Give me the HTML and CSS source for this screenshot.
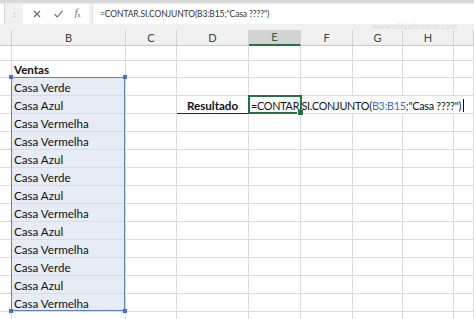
FILE: index.html
```html
<!DOCTYPE html>
<html lang="es">
<head>
<meta charset="utf-8">
<title>CONTAR.SI.CONJUNTO</title>
<link rel="stylesheet" href="styles.css">
</head>
<body>
<div class="app">
  <div class="topedge"></div>
  <div class="fbar">
    <div class="namebox"></div>
    <div class="grip"><span></span><span></span><span></span></div>
    <div class="fbtns">
      <svg class="ic" width="10" height="10" viewBox="0 0 10 10"><path d="M2 2L8 8M8 2L2 8" stroke="#666" stroke-width="1.1" fill="none"/></svg>
      <svg class="ic" width="11" height="10" viewBox="0 0 11 10"><path d="M1.5 5.2L4.2 8L9.5 1.8" stroke="#666" stroke-width="1.1" fill="none"/></svg>
      <span class="fx"><i>f</i><sub>x</sub></span>
    </div>
    <div class="finput">=CONTAR.SI.CONJUNTO(B3:B15;"Casa ????")</div>
  </div>
  <div class="gap"><span class="watermark">www.ninjadoexcel.com</span></div>
  <div class="sheet">
    <div class="row hdr">
      <div class="c"></div><div class="c">B</div><div class="c">C</div><div class="c">D</div><div class="c act">E</div><div class="c">F</div><div class="c">G</div><div class="c">H</div><div class="c"></div>
    </div>
    <div class="row r1">
      <div class="c"></div><div class="c"></div><div class="c"></div><div class="c"></div><div class="c"></div><div class="c"></div><div class="c"></div><div class="c"></div><div class="c"></div>
    </div>
    <div class="row r2">
      <div class="c"></div><div class="c b">Ventas</div><div class="c"></div><div class="c"></div><div class="c"></div><div class="c"></div><div class="c"></div><div class="c"></div><div class="c"></div>
    </div>
    <div class="row">
      <div class="c"></div><div class="c s">Casa Verde</div><div class="c"></div><div class="c"></div><div class="c"></div><div class="c"></div><div class="c"></div><div class="c"></div><div class="c"></div>
    </div>
    <div class="row">
      <div class="c"></div><div class="c s">Casa Azul</div><div class="c"></div><div class="c res">Resultado</div><div class="c flow"><span class="formula">=CONTAR.SI.CONJUNTO(<span class="ref">B3:B15</span>;"Casa ????")<span class="caret"></span></span></div><div class="c flow"></div><div class="c flow"></div><div class="c flow"></div><div class="c"></div>
    </div>
    <div class="row">
      <div class="c"></div><div class="c s">Casa Vermelha</div><div class="c"></div><div class="c"></div><div class="c"></div><div class="c"></div><div class="c"></div><div class="c"></div><div class="c"></div>
    </div>
    <div class="row">
      <div class="c"></div><div class="c s">Casa Vermelha</div><div class="c"></div><div class="c"></div><div class="c"></div><div class="c"></div><div class="c"></div><div class="c"></div><div class="c"></div>
    </div>
    <div class="row">
      <div class="c"></div><div class="c s">Casa Azul</div><div class="c"></div><div class="c"></div><div class="c"></div><div class="c"></div><div class="c"></div><div class="c"></div><div class="c"></div>
    </div>
    <div class="row">
      <div class="c"></div><div class="c s">Casa Verde</div><div class="c"></div><div class="c"></div><div class="c"></div><div class="c"></div><div class="c"></div><div class="c"></div><div class="c"></div>
    </div>
    <div class="row">
      <div class="c"></div><div class="c s">Casa Azul</div><div class="c"></div><div class="c"></div><div class="c"></div><div class="c"></div><div class="c"></div><div class="c"></div><div class="c"></div>
    </div>
    <div class="row">
      <div class="c"></div><div class="c s">Casa Vermelha</div><div class="c"></div><div class="c"></div><div class="c"></div><div class="c"></div><div class="c"></div><div class="c"></div><div class="c"></div>
    </div>
    <div class="row">
      <div class="c"></div><div class="c s">Casa Azul</div><div class="c"></div><div class="c"></div><div class="c"></div><div class="c"></div><div class="c"></div><div class="c"></div><div class="c"></div>
    </div>
    <div class="row">
      <div class="c"></div><div class="c s">Casa Vermelha</div><div class="c"></div><div class="c"></div><div class="c"></div><div class="c"></div><div class="c"></div><div class="c"></div><div class="c"></div>
    </div>
    <div class="row">
      <div class="c"></div><div class="c s">Casa Verde</div><div class="c"></div><div class="c"></div><div class="c"></div><div class="c"></div><div class="c"></div><div class="c"></div><div class="c"></div>
    </div>
    <div class="row">
      <div class="c"></div><div class="c s">Casa Azul</div><div class="c"></div><div class="c"></div><div class="c"></div><div class="c"></div><div class="c"></div><div class="c"></div><div class="c"></div>
    </div>
    <div class="row">
      <div class="c"></div><div class="c s">Casa Vermelha</div><div class="c"></div><div class="c"></div><div class="c"></div><div class="c"></div><div class="c"></div><div class="c"></div><div class="c"></div>
    </div>
    <div class="row">
      <div class="c"></div><div class="c"></div><div class="c"></div><div class="c"></div><div class="c"></div><div class="c"></div><div class="c"></div><div class="c"></div><div class="c"></div>
    </div>
    <div class="selection">
      <i class="h tl"></i><i class="h tr"></i><i class="h bl"></i><i class="h br"></i>
    </div>
    <div class="active"><i class="ah"></i></div>
  </div>
</div>
</body>
</html>
```
FILE: styles.css
```css
html, body {
  margin: 0;
  padding: 0;
  background: #ffffff;
}
body {
  width: 474px;
  height: 319px;
  overflow: hidden;
  font-family: Lato, "Open Sans", "Liberation Sans", sans-serif;
}
.app {
  display: flex;
  flex-direction: column;
  height: 319px;
  background: #f0f0f0;
}
.topedge {
  height: 3px;
  background: #d8d8d8;
  flex: none;
}
.fbar {
  display: flex;
  align-items: stretch;
  height: 20px;
  margin-top: 1px;
  flex: none;
}
.namebox {
  width: 4px;
  background: #fff;
  border-right: 1px solid #d4d4d4;
}
.grip {
  width: 18px;
  display: flex;
  flex-direction: column;
  align-items: center;
  justify-content: center;
  gap: 1px;
}
.grip span {
  width: 1px;
  height: 1px;
  background: #b5b5b5;
}
.fbtns {
  width: 66px;
  background: #fff;
  display: flex;
  align-items: center;
  justify-content: space-around;
  padding: 0 3px;
  box-sizing: border-box;
}
.fx {
  font-family: "Liberation Serif", serif;
  color: #666;
  font-size: 10px;
  line-height: 10px;
}
.fx sub {
  font-size: 6px;
  vertical-align: -1px;
}
.finput {
  flex: 1;
  margin-left: 3px;
  background: #fff;
  border-left: 1px solid #e2e2e2;
  font-size: 8.5px;
  letter-spacing: -0.1px;
  color: #333;
  line-height: 20px;
  padding-left: 7px;
  white-space: nowrap;
}
.gap {
  position: relative;
  height: 6px;
  flex: none;
}
.watermark {
  position: absolute;
  top: -1px;
  left: 372px;
  font-size: 8px;
  line-height: 7px;
  color: #d6d6d6;
  letter-spacing: 0.2px;
  white-space: nowrap;
  z-index: 3;
}
.sheet {
  position: relative;
  flex: none;
  display: flex;
  flex-direction: column;
  background: #fff;
}
.row {
  display: grid;
  grid-template-columns: 12px 114px 51px 72px 52px 52px 50px 51px 1fr;
  height: 18px;
  flex: none;
}
.c {
  border-right: 1px solid #dcdcdc;
  border-bottom: 1px solid #dcdcdc;
  font-size: 11.6px;
  color: #111;
  padding-left: 2px;
  display: flex;
  align-items: flex-end;
  padding-bottom: 0;
  white-space: nowrap;
  min-width: 0;
  line-height: 14px;
}
.hdr {
  height: 16px;
  background: #f0f0f0;
}
.hdr .c {
  background: #f0f0f0;
  border-right: 1px solid #d2d2d2;
  border-bottom: 1px solid #c9c9c9;
  justify-content: center;
  align-items: center;
  padding: 0;
  color: #444;
  font-size: 11px;
}
.hdr .c.act {
  background: #d3d3d3;
  border-bottom: 2px solid #217346;
  color: #2f5e3f;
}
.r1 { height: 15px; }
.r2 { height: 17px; }
.b { font-weight: 700; }
.s { background: #e6ecf6; }
.res {
  font-weight: 700;
  justify-content: center;
  padding-left: 0;
  border-bottom: 1px solid #262626;
}
.flow { border-right: none; overflow: visible; }
.formula {
  position: relative;
  z-index: 2;
  font-size: 10.8px;
  letter-spacing: -0.25px;
}
.ref { color: #3b6fc4; }
.caret {
  display: inline-block;
  width: 1px;
  height: 13px;
  background: #111;
  margin-left: 2px;
  vertical-align: -2px;
}
.selection {
  position: absolute;
  left: 11px;
  top: 47px;
  width: 112px;
  height: 232px;
  border: 1.5px solid #5a7fc6;
}
.h {
  position: absolute;
  width: 4px;
  height: 4px;
  background: #4a6fbf;
}
.tl { left: -3px; top: -3px; }
.tr { right: -3px; top: -3px; }
.bl { left: -3px; bottom: -3px; }
.br { right: -3px; bottom: -3px; }
.active {
  position: absolute;
  left: 248px;
  top: 65px;
  width: 50px;
  height: 15px;
  border: 2px solid #217346;
  z-index: 1;
}
.ah {
  position: absolute;
  right: -4px;
  bottom: -4px;
  width: 5px;
  height: 5px;
  background: #217346;
  border: 1px solid #fff;
}
```
